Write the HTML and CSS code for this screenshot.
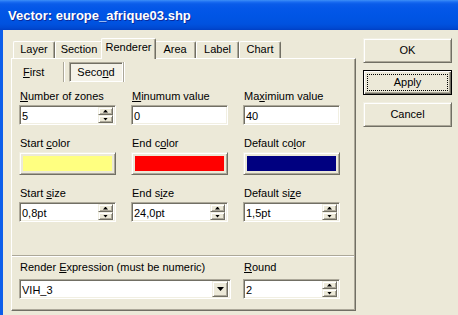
FILE: index.html
```html
<!DOCTYPE html>
<html>
<head>
<meta charset="utf-8">
<title>Vector</title>
<link rel="stylesheet" href="styles.css">
</head>
<body>
<div class="window">
  <div class="titlebar"><span class="title">Vector: europe_afrique03.shp</span></div>
  <div class="client">
    <div class="props">
      <div class="tabs">
        <div class="tab w-layer">Layer</div>
        <div class="tab w-section">Section</div>
        <div class="tab active w-renderer">Renderer</div>
        <div class="tab w-area">Area</div>
        <div class="tab w-label">Label</div>
        <div class="tab w-chart">Chart</div>
      </div>
      <div class="panel">
        <div class="subtabs">
          <div class="subtab first"><u>F</u>irst</div>
          <div class="vsep"></div>
          <div class="subtab pressed">Seco<u>n</u>d</div>
          <div class="vsep"></div>
        </div>
        <div class="fields">
          <div class="field">
            <div class="lbl"><u>N</u>umber of zones</div>
            <div class="edit"><span class="val">5</span><span class="spin"><span class="sbtn up"></span><span class="sbtn down"></span></span></div>
          </div>
          <div class="field">
            <div class="lbl"><u>M</u>inumum value</div>
            <div class="edit"><span class="val">0</span></div>
          </div>
          <div class="field">
            <div class="lbl">Ma<u>x</u>imium value</div>
            <div class="edit"><span class="val">40</span></div>
          </div>

          <div class="field">
            <div class="lbl">Start <u>c</u>olor</div>
            <div class="colorbtn"><span class="swatch yellow"></span></div>
          </div>
          <div class="field">
            <div class="lbl">End c<u>o</u>lor</div>
            <div class="colorbtn"><span class="swatch red"></span></div>
          </div>
          <div class="field">
            <div class="lbl">Default co<u>l</u>or</div>
            <div class="colorbtn"><span class="swatch navy"></span></div>
          </div>

          <div class="field">
            <div class="lbl">Start <u>s</u>ize</div>
            <div class="edit"><span class="val">0,8pt</span><span class="spin"><span class="sbtn up"></span><span class="sbtn down"></span></span></div>
          </div>
          <div class="field">
            <div class="lbl">End s<u>i</u>ze</div>
            <div class="edit"><span class="val">24,0pt</span><span class="spin"><span class="sbtn up"></span><span class="sbtn down"></span></span></div>
          </div>
          <div class="field">
            <div class="lbl">Default si<u>z</u>e</div>
            <div class="edit"><span class="val">1,5pt</span><span class="spin"><span class="sbtn up"></span><span class="sbtn down"></span></span></div>
          </div>
        </div>
        <div class="groove"></div>
        <div class="fields bottom">
          <div class="field wide">
            <div class="lbl">Render <u>E</u>xpression (must be numeric)</div>
            <div class="edit combo"><span class="val">VIH_3</span><span class="dropbtn"><span class="darrow"></span></span></div>
          </div>
          <div class="field">
            <div class="lbl"><u>R</u>ound</div>
            <div class="edit"><span class="val">2</span><span class="spin"><span class="sbtn up"></span><span class="sbtn down"></span></span></div>
          </div>
        </div>
      </div>
    </div>
    <div class="buttons">
      <div class="btn">OK</div>
      <div class="btn default"><span class="focus">Apply</span></div>
      <div class="btn">Cancel</div>
    </div>
  </div>
</div>
</body>
</html>
```

FILE: styles.css
```css
* { box-sizing: border-box; }
html, body { margin: 0; padding: 0; }
body {
  width: 458px;
  height: 315px;
  overflow: hidden;
  background: #ECE9D8;
  font-family: "Liberation Sans", Arial, sans-serif;
  font-size: 11px;
  line-height: 13px;
  color: #000;
}
u { text-decoration: underline; text-underline-offset: 1px; }

.window { display: flex; flex-direction: column; height: 315px; }

.titlebar {
  flex: none;
  height: 30px;
  display: flex;
  align-items: center;
  padding: 1px 0 0 8px;
  background: linear-gradient(180deg, #3d8ff7 0px, #1a6cf2 2px, #0a5ce9 4px, #0457e8 8px, #0055e5 16px, #0052df 24px, #0049d2 28px, #003fc4 30px);
}
.title {
  color: #fff;
  font-weight: bold;
  font-size: 13px;
  line-height: 16px;
  text-shadow: 1px 1px 0 #0a2a9c;
}

.client {
  flex: 1;
  display: flex;
  gap: 7px;
  padding: 8px 0 0 8px;
  border-left: 3px solid #0c5eea;
  background: #ECE9D8;
}

.props { width: 345px; flex: none; display: flex; flex-direction: column; }

.tabs {
  display: flex;
  align-items: flex-end;
  height: 20px;
  padding-left: 2px;
  position: relative;
  z-index: 1;
}
.tab {
  height: 17px;
  padding-top: 1px;
  text-align: center;
  border-top: 1px solid #fff;
  border-left: 1px solid #fff;
  border-right: 1px solid #716F64;
  box-shadow: inset -1px 0 0 #ACA899;
  border-radius: 2px 2px 0 0;
  background: #ECE9D8;
}
.tab.active {
  height: 21px;
  margin: 0 -2px -1px;
  padding-top: 2px;
  position: relative;
  z-index: 2;
}
.w-layer { width: 42px; }
.w-section { width: 48px; }
.w-renderer { width: 55px; }
.w-area { width: 42px; }
.w-label { width: 43px; }
.w-chart { width: 42px; }

.panel {
  height: 253px;
  border-top: 1px solid #fff;
  border-left: 1px solid #fff;
  border-right: 1px solid #716F64;
  border-bottom: 1px solid #716F64;
  box-shadow: inset -1px -1px 0 #ACA899;
  display: flex;
  flex-direction: column;
}

.subtabs {
  display: flex;
  align-items: stretch;
  height: 20px;
  margin-top: 3px;
  padding-left: 1px;
}
.subtab {
  display: flex;
  align-items: center;
  height: 20px;
}
.subtab.first { width: 50px; padding-left: 10px; }
.subtab.pressed {
  width: 54px;
  margin-left: 4px;
  justify-content: center;
  border-top: 1px solid #ACA899;
  border-left: 1px solid #ACA899;
  border-right: 1px solid #fff;
  border-bottom: 1px solid #fff;
  box-shadow: inset 1px 1px 0 #716F64;
  background: #F4F2E8;
  padding-top: 1px;
}
.vsep {
  width: 2px;
  border-left: 1px solid #ACA899;
  border-right: 1px solid #fff;
}

.fields {
  display: grid;
  grid-template-columns: 97px 97px 97px;
  column-gap: 15px;
  row-gap: 12px;
  padding-left: 7px;
  margin-top: 8px;
}
.field { display: flex; flex-direction: column; }
.lbl { height: 13px; padding-left: 1px; margin-bottom: 2px; white-space: nowrap; }
.bottom { margin-top: 4px; }
.bottom .lbl { margin-bottom: 5px; }
.field.wide { grid-column: span 2; }

.edit {
  height: 20px;
  display: flex;
  background: #fff;
  border-top: 1px solid #ACA899;
  border-left: 1px solid #ACA899;
  border-right: 1px solid #fff;
  border-bottom: 1px solid #fff;
  box-shadow: inset 1px 1px 0 #716F64, inset -1px -1px 0 #F1EFE2;
  padding: 1px;
}
.val { flex: 1; padding: 2px 0 0 1px; line-height: 14px; white-space: nowrap; }
.spin { width: 15px; display: flex; flex-direction: column; margin-right: 1px; }
.sbtn {
  height: 8px;
  display: flex;
  align-items: center;
  justify-content: center;
  background: #ECE9D8;
  border-top: 1px solid #F1EFE2;
  border-left: 1px solid #F1EFE2;
  border-right: 1px solid #716F64;
  border-bottom: 1px solid #716F64;
  box-shadow: inset 1px 1px 0 #fff, inset -1px -1px 0 #ACA899;
}
.sbtn::after {
  content: "";
  width: 5px;
  height: 3px;
  background: #000;
}
.sbtn.up::after { clip-path: polygon(50% 0, 100% 100%, 0 100%); }
.sbtn.down::after { clip-path: polygon(0 0, 100% 0, 50% 100%); }

.combo { width: 212px; }
.dropbtn {
  width: 16px;
  margin-right: 1px;
  display: flex;
  align-items: center;
  justify-content: center;
  background: #ECE9D8;
  border-top: 1px solid #F1EFE2;
  border-left: 1px solid #F1EFE2;
  border-right: 1px solid #716F64;
  border-bottom: 1px solid #716F64;
  box-shadow: inset 1px 1px 0 #fff, inset -1px -1px 0 #ACA899;
}
.darrow {
  width: 7px;
  height: 4px;
  margin-left: 1px;
  background: #000;
  clip-path: polygon(0 0, 100% 0, 50% 100%);
}

.colorbtn {
  height: 23px;
  display: flex;
  padding: 3px;
  background: #ECE9D8;
  border-top: 1px solid #F1EFE2;
  border-left: 1px solid #F1EFE2;
  border-right: 1px solid #716F64;
  border-bottom: 1px solid #716F64;
  box-shadow: inset 1px 1px 0 #fff, inset -1px -1px 0 #ACA899;
}
.swatch { flex: 1; }
.yellow { background: #FFFF80; }
.red { background: #FF0000; }
.navy { background: #000080; }

.groove {
  height: 2px;
  margin: 33px 1px 0 0;
  border-top: 1px solid #ACA899;
  border-bottom: 1px solid #fff;
}

.buttons { width: 89px; display: flex; flex-direction: column; gap: 7px; }
.btn {
  height: 25px;
  display: flex;
  align-items: center;
  justify-content: center;
  background: #ECE9D8;
  border-top: 1px solid #F1EFE2;
  border-left: 1px solid #F1EFE2;
  border-right: 1px solid #716F64;
  border-bottom: 1px solid #716F64;
  box-shadow: inset 1px 1px 0 #fff, inset -1px -1px 0 #ACA899;
}
.btn.default {
  border: 1px solid #000;
  box-shadow: inset 1px 1px 0 #fff, inset -1px -1px 0 #716F64, inset -2px -2px 0 #ACA899;
  align-items: stretch;
  justify-content: stretch;
  padding: 3px;
}
.focus {
  flex: 1;
  display: flex;
  align-items: center;
  justify-content: center;
  border: 1px dotted #000;
}
```
